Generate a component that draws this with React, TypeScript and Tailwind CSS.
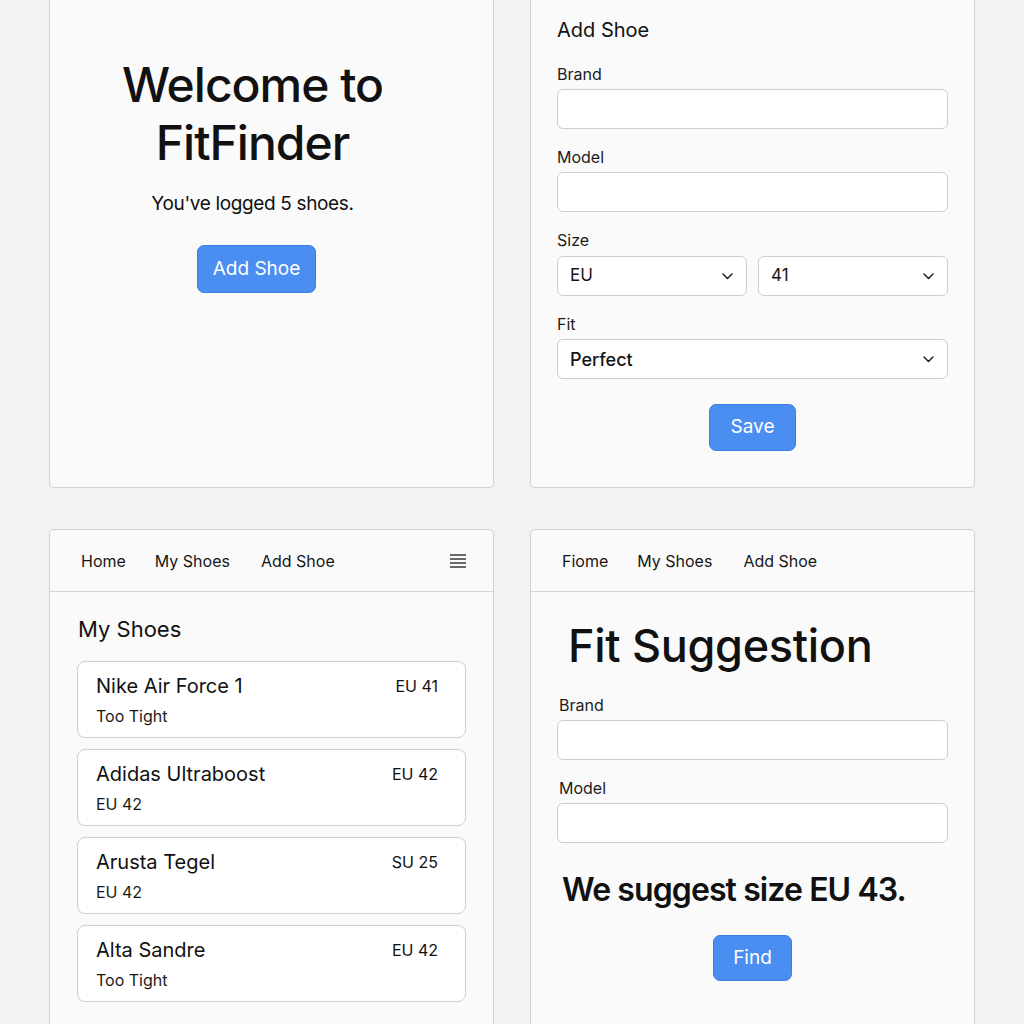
import React from 'react';

const shoes = [
  { name: 'Nike Air Force 1', size: 'EU 41', note: 'Too Tight' },
  { name: 'Adidas Ultraboost', size: 'EU 42', note: 'EU 42' },
  { name: 'Arusta Tegel', size: 'SU 25', note: 'EU 42' },
  { name: 'Alta Sandre', size: 'EU 42', note: 'Too Tight' },
];

function Chevron() {
  return (
    <svg width="11" height="7" viewBox="0 0 11 7" fill="none" className="shrink-0">
      <path d="M1 1l4.5 4.5L10 1" stroke="#222" strokeWidth="1.5" strokeLinecap="round" strokeLinejoin="round" />
    </svg>
  );
}

function Field({ label, className = '' }: { label: string; className?: string }) {
  return (
    <div className="flex flex-col">
      <label className={`text-[16px] leading-[24px] text-[#1c1c1c] mb-[3px] ${className}`}>{label}</label>
      <div className="h-[40px] rounded-md border border-[#cdcdcd] bg-white" />
    </div>
  );
}

function FakeSelect({ value, bold = false }: { value: string; bold?: boolean }) {
  return (
    <div className="flex-1 min-h-[40px] h-[40px] rounded-md border border-[#cdcdcd] bg-white flex items-center justify-between pl-[12px] pr-[13px]">
      <span className={`text-[#161616] ${bold ? 'text-[18px] font-medium' : 'text-[17px]'}`}>{value}</span>
      <Chevron />
    </div>
  );
}

function BlueButton({ children, className = '' }: { children: React.ReactNode; className?: string }) {
  return (
    <button className={`bg-[#4a8ef1] border border-[#3a7fe8] text-white text-[19px] rounded-[7px] ${className}`}>
      {children}
    </button>
  );
}

function Nav({ first, menu = false }: { first: string; menu?: boolean }) {
  return (
    <div className="h-[62px] border-b border-[#d6d6d6] flex items-center pl-[31px] pr-[27px]">
      <div className="flex items-center gap-[29px] text-[16px] text-[#161616]">
        <span>{first}</span>
        <span>My Shoes</span>
        <span className="ml-[2px]">Add Shoe</span>
      </div>
      {menu && (
        <svg width="16" height="14" viewBox="0 0 16 14" className="ml-auto">
          <path d="M0 1h16M0 5h16M0 9h16M0 13h16" stroke="#3a3a3a" strokeWidth="1.4" />
        </svg>
      )}
    </div>
  );
}

export default function App() {
  return (
    <div className="min-h-screen bg-[#f2f2f2] font-[Inter,sans-serif] text-[#111] overflow-hidden h-[1024px]">
      <div className="grid grid-cols-[445px_445px] gap-x-[36px] gap-y-[41px] px-[49px]">
        {/* Home */}
        <div className="h-[488px] bg-[#fafafa] border border-t-0 border-[#d2d2d2] rounded-b-[5px] pr-[38px] pt-[56px] flex flex-col items-center">
          <h1 className="text-[48px] leading-[58px] font-medium text-center tracking-[-1px]">
            Welcome to
            <br />
            FitFinder
          </h1>
          <p className="mt-[18px] text-[19px] leading-[28px] tracking-[-0.35px]">You've logged 5 shoes.</p>
          <BlueButton className="mt-[27px] w-[119px] h-[48px] ml-[8px]">Add Shoe</BlueButton>
        </div>

        {/* Add shoe form */}
        <div className="h-[488px] bg-[#fafafa] border border-t-0 border-[#d2d2d2] rounded-b-[5px] px-[26px] pt-[16px] flex flex-col">
          <h2 className="text-[20px] leading-[28px]">Add Shoe</h2>
          <div className="mt-[18px] flex flex-col gap-[16px]">
            <Field label="Brand" />
            <Field label="Model" />
            <div className="flex flex-col">
              <label className="text-[16px] leading-[24px] text-[#1c1c1c] mb-[4px]">Size</label>
              <div className="flex gap-[11px]">
                <FakeSelect value="EU" />
                <FakeSelect value="41" />
              </div>
            </div>
            <div className="flex flex-col">
              <label className="text-[16px] leading-[24px] text-[#1c1c1c] mb-[3px]">Fit</label>
              <div className="flex">
                <FakeSelect value="Perfect" bold />
              </div>
            </div>
          </div>
          <div className="flex justify-center mt-[25px]">
            <BlueButton className="w-[87px] h-[47px]">Save</BlueButton>
          </div>
        </div>

        {/* My shoes */}
        <div className="h-[520px] bg-[#fafafa] border border-[#d2d2d2] rounded-[5px]">
          <Nav first="Home" menu />
          <div className="px-[27px] pt-[22px]">
            <h2 className="text-[22px] leading-[30px] ml-[1px]">My Shoes</h2>
            <div className="mt-[17px] flex flex-col gap-[11px]">
              {shoes.map((s) => (
                <div key={s.name} className="bg-white border border-[#cfcfcf] rounded-lg pl-[18px] pr-[27px] pt-[10px] pb-[9px]">
                  <div className="flex items-center justify-between">
                    <span className="text-[20px] leading-[28px]">{s.name}</span>
                    <span className="text-[16px]">{s.size}</span>
                  </div>
                  <div className="mt-[4px] text-[16px] leading-[24px] text-[#1a1a1a]">{s.note}</div>
                </div>
              ))}
            </div>
          </div>
        </div>

        {/* Fit suggestion */}
        <div className="h-[520px] bg-[#fafafa] border border-[#d2d2d2] rounded-[5px]">
          <Nav first="Fiome" />
          <div className="px-[26px] pt-[27px] flex flex-col">
            <h2 className="text-[45px] leading-[54px] font-medium ml-[11px] tracking-[-0.3px]">Fit Suggestion</h2>
            <div className="mt-[20px] flex flex-col gap-[16px]">
              <Field label="Brand" className="ml-[2px]" />
              <Field label="Model" className="ml-[2px]" />
            </div>
            <p className="mt-[27px] ml-[5px] text-[32px] leading-[40px] font-semibold tracking-[-0.9px]">We suggest size EU 43.</p>
            <div className="flex justify-center mt-[25px]">
              <BlueButton className="w-[79px] h-[46px]">Find</BlueButton>
            </div>
          </div>
        </div>
      </div>
    </div>
  );
}
